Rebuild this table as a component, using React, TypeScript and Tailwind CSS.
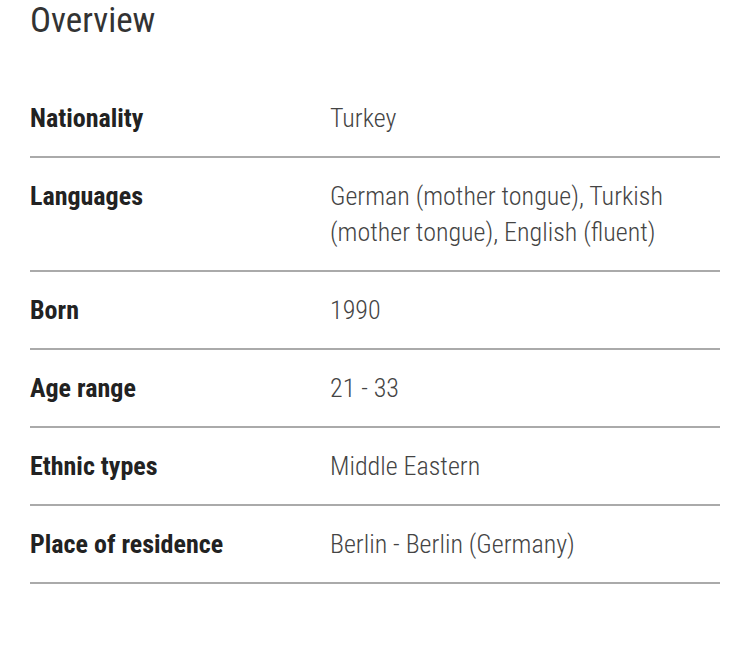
const rows: { label: string; value: string }[] = [
  { label: 'Nationality', value: 'Turkey' },
  { label: 'Languages', value: 'German (mother tongue), Turkish (mother tongue), English (fluent)' },
  { label: 'Born', value: '1990' },
  { label: 'Age range', value: '21 - 33' },
  { label: 'Ethnic types', value: 'Middle Eastern' },
  { label: 'Place of residence', value: 'Berlin - Berlin (Germany)' },
];

export default function App() {
  return (
    <div className="min-h-[653px] w-[750px] bg-white px-[30px] font-['Roboto',sans-serif] font-stretch-condensed">
      <h2 className="pt-[1px] text-[35px] leading-[40px] font-normal text-[#333]">Overview</h2>
      <div className="mt-[39px]">
        {rows.map((row) => (
          <div key={row.label} className="flex border-b-2 border-[#aaa] py-[20px]">
            <div className="w-[300px] shrink-0 text-[26px] leading-[36px] font-bold text-[#222]">
              {row.label}
            </div>
            <div className="w-[345px] text-[26px] leading-[36px] font-light text-[#444]">{row.value}</div>
          </div>
        ))}
      </div>
    </div>
  );
}
